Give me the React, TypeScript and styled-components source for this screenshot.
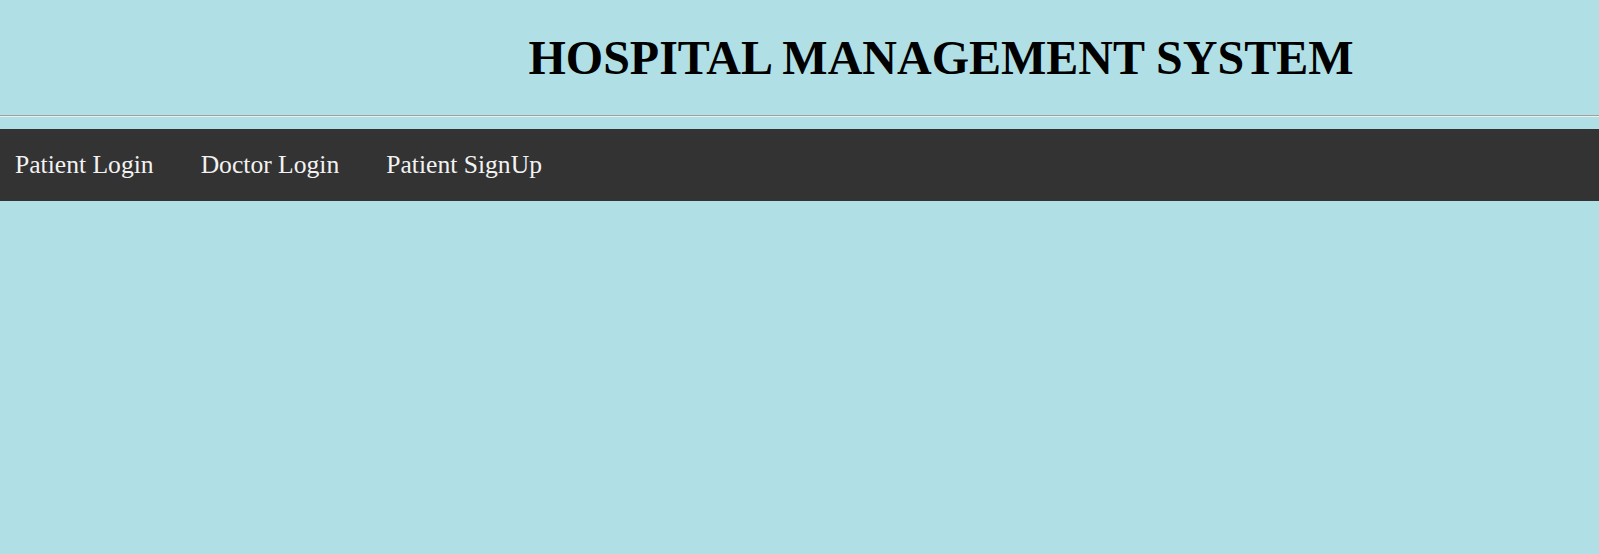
import React from "react";
import styled, { createGlobalStyle } from "styled-components";

const GlobalStyle = createGlobalStyle`
  html, body {
    margin: 0;
    padding: 0;
    background-color: #b0e0e6;
    font-family: "Liberation Serif", "Times New Roman", serif;
  }
`;

const links = ["Patient Login", "Doctor Login", "Patient SignUp"];

function App() {
  return (
    <>
      <GlobalStyle />
      <Page>
        <Header>
          <Title>HOSPITAL MANAGEMENT SYSTEM</Title>
        </Header>
        <Divider />
        <TopNav>
          {links.map((label) => (
            <NavLink key={label} href="#">
              {label}
            </NavLink>
          ))}
        </TopNav>
      </Page>
    </>
  );
}

const Page = styled.div`
  min-height: 554px;
  background-color: #b0e0e6;
`;

const Header = styled.header`
  display: flex;
  justify-content: center;
  padding: 34px 0 0 283px;
  height: 81px;
  box-sizing: border-box;
`;

const Title = styled.h1`
  margin: 0;
  font-size: 48px;
  line-height: 47px;
  font-weight: bold;
  color: #000;
  white-space: nowrap;
`;

const Divider = styled.hr`
  margin: 34px 0 12px;
  border: none;
  border-top: 1px solid #a0a0a0;
  border-bottom: 1px solid #eeeeee;
  height: 0;
`;

const TopNav = styled.nav`
  display: flex;
  align-items: center;
  gap: 47px;
  height: 72px;
  padding: 0 15px;
  background-color: #333;
`;

const NavLink = styled.a`
  color: #f2f2f2;
  font-size: 25.6px;
  text-decoration: none;
`;

export default App;
